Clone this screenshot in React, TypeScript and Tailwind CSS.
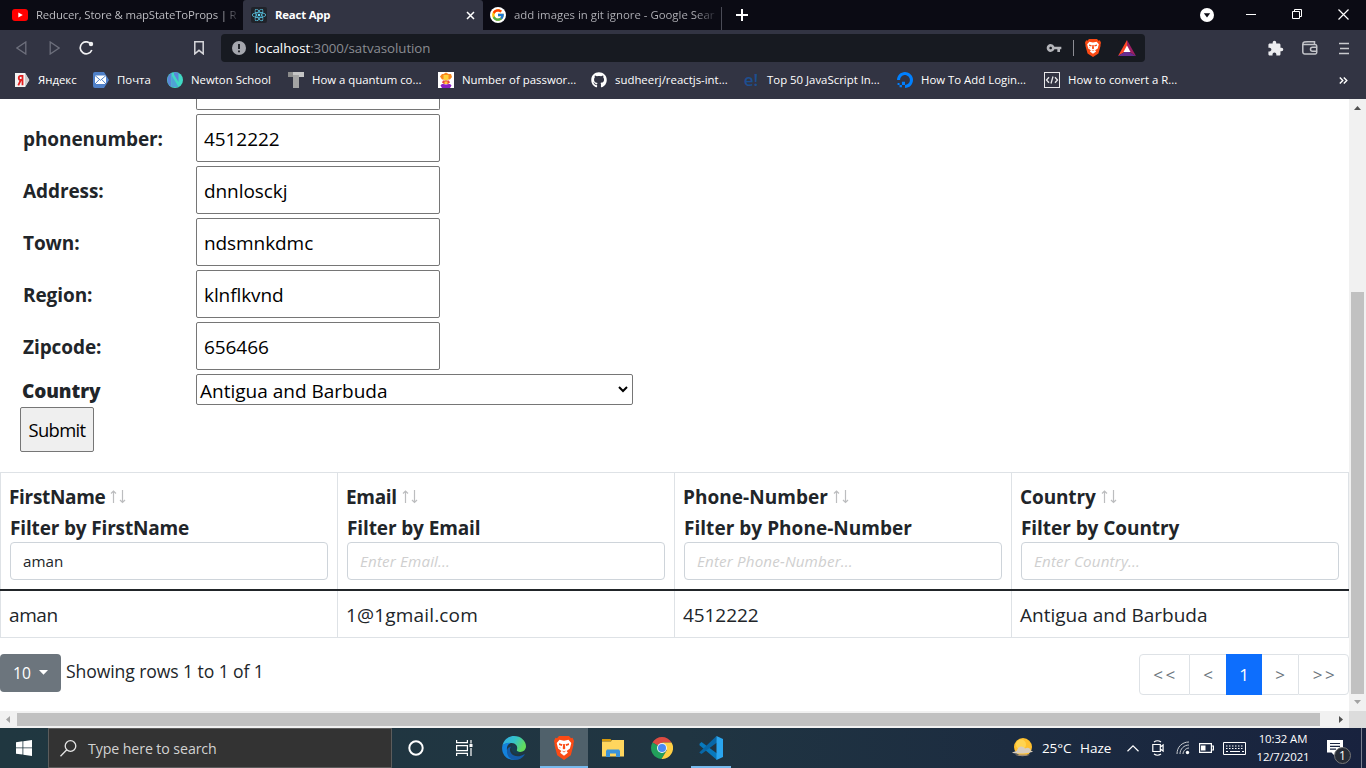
import type { ReactNode } from "react";
import { FaGithub, FaReact } from "react-icons/fa";
import { SiDigitalocean } from "react-icons/si";
import { FcGoogle } from "react-icons/fc";
import { MdExtension, MdVpnKey } from "react-icons/md";

function BraveIcon({ w, h }: { w: number; h: number }) {
  return (
    <span className="flex shrink-0 items-center justify-center">
      <svg width={w} height={h} viewBox="0 0 20 24" preserveAspectRatio="none">
        <path d="M5 0h10l2 2.200l1.600-.4L20 5l-.7 3 .2 1-2.700 10.200L10 24l-6.800-4.800L.5 9l.2-1L0 5l1.400-3.200L3 2.200z" fill="#fb4a14" />
        <path d="M5.500 3.800 10 4.700l4.500-.9L17.300 7l-1.400 5.600L12.600 15l1.300 1.700L10 19.800l-3.900-3.100L7.400 15l-3.300-2.400L2.700 7z" fill="#fff" />
        <path d="M5 7.300l3.500 1L7.800 10 5 9zM15 7.300l-3.500 1 .7 1.700L15 9zM9.200 8h1.600l.5 4.500L10 13.500l-1.300-1zM7.700 14.400l2.300 1 2.300-1L10 16.400zM4.500 11l1.500 1.300L7 12z" fill="#fb4a14" />
      </svg>
    </span>
  );
}

function YoutubeIcon() {
  return (
    <svg width="16" height="16" viewBox="0 0 16 16">
      <rect x="0" y="2" width="16" height="12" rx="3" fill="#f00" />
      <path d="M6.300 5.400v5.200L10.800 8z" fill="#fff" />
    </svg>
  );
}

function YandexIcon() {
  return (
    <svg width="16" height="16" viewBox="0 0 16 16">
      <path d="M1 1h10l4.300 7L11 15H1z" fill="#f3f3f3" />
      <path d="M11 1l4.300 7L11 15z" fill="#cfcfcf" />
      <path d="M8.500 3v10.300M8.500 3.800H6.800c-2.700 0-2.700 4.200 0 4.200h1.700M6.800 8 4.300 13.300" stroke="#e02020" strokeWidth="1.800" fill="none" />
    </svg>
  );
}

function MailIcon() {
  return (
    <svg width="16" height="16" viewBox="0 0 16 16">
      <path d="M2 0h9l5 8-5 8H2a2 2 0 0 1-2-2V2a2 2 0 0 1 2-2z" fill="#4f80c8" />
      <rect x="2" y="3.500" width="11" height="8.500" fill="#fff" />
      <path d="M2 3.500l5.500 4.800L13 3.500M2 12l4.300-4.500M13 12 8.700 7.500" stroke="#4f80c8" strokeWidth="1" fill="none" />
    </svg>
  );
}

function NewtonIcon() {
  return (
    <svg width="16" height="16" viewBox="0 0 16 16">
      <circle cx="8" cy="8" r="8" fill="#40d9c4" />
      <path d="M4.500 1A8 8 0 0 0 4.500 15zM11.500 1v9L7 2.500V0z" fill="#5c86d8" />
      <path d="M5 15V4l6.500 11z" fill="#4fa3d6" />
    </svg>
  );
}

function QuantumIcon() {
  return (
    <svg width="16" height="16" viewBox="0 0 16 16">
      <path d="M0 0h7v5H0z" fill="#8b8b8b" />
      <path d="M5 0h11v5H5z" fill="#c5c5c5" />
      <path d="M5 3h6v13H5z" fill="#a3a3a3" />
    </svg>
  );
}

function WizardIcon() {
  return (
    <svg width="16" height="16" viewBox="0 0 16 16">
      <rect width="16" height="16" fill="#fff" />
      <path d="M2 4.500 4 2l1.500 0L8 .5l2.500 1.500L13 2l1 3-2 2.500H4z" fill="#f7871f" />
      <path d="M5.500 3h5v4l-2.500 2L5.500 7z" fill="#ffd23c" />
      <path d="M5 8.500h6l1 2-2 1.500H6l-2-1.500z" fill="#e9443c" />
      <path d="M6.500 9.500h3v2.500h-3z" fill="#ffcf3c" />
      <path d="M2.500 13.500C4 11 6 12 8 12.500c2-.5 4-1.500 5.500 1L12 16H4z" fill="#8a1fc4" />
    </svg>
  );
}

function CodeIcon() {
  return (
    <svg width="16" height="16" viewBox="0 0 16 16" fill="none" stroke="#e8e8ea">
      <rect x=".5" y=".5" width="15" height="15" />
      <path d="M5 5.200 2.500 8 5 10.800M11 5.200 13.500 8 11 10.800M9 4.500l-2 7" strokeWidth="1.300" />
    </svg>
  );
}

function Tab({ icon, title, className }: { icon: ReactNode; title: ReactNode; className: string }) {
  return (
    <div className={`flex h-[30px] shrink-0 items-center ${className}`}>
      <span className="flex size-4 shrink-0 items-center justify-center">{icon}</span>
      {title}
    </div>
  );
}

function Bookmark({ icon, label, className }: { icon: ReactNode; label: string; className: string }) {
  return (
    <div className={`flex shrink-0 items-center whitespace-nowrap ${className}`}>
      <span className="mr-2 flex size-4 shrink-0 items-center justify-center">{icon}</span>
      {label}
    </div>
  );
}

function Browser() {
  return (
    <header className="flex h-[99px] shrink-0 flex-col bg-[#323443] text-[11.4px] text-white">
      <div className="flex h-[30px] bg-[#0b0b14]">
        <Tab
          className="w-[243px] pl-3"
          icon={<YoutubeIcon />}
          title={
            <span className="ml-2 w-[206px] bg-linear-to-r from-[#c3c3c8] from-90% to-[#0b0b14] bg-clip-text tracking-[-0.16px] whitespace-nowrap text-transparent">
              Reducer, Store &amp; mapStateToProps | R
            </span>
          }
        />
        <Tab
          className="w-[240px] rounded-t-[3px] bg-[#323443] pl-2"
          icon={
            <span className="flex size-4 items-center justify-center rounded-[2px] bg-[#20232a] text-[#61dafb]">
              <FaReact size={14} />
            </span>
          }
          title={
            <>
              <span className="ml-2 w-[190px] font-bold tracking-[-0.2px]">React App</span>
              <svg width="9" height="9" viewBox="0 0 9 9" className="ml-px">
                <path d="M1 1l7 7M8 1 1 8" stroke="#fff" strokeWidth="1.500" />
              </svg>
            </>
          }
        />
        <Tab
          className="w-[238px] pl-[7px]"
          icon={
            <span className="flex size-4 items-center justify-center rounded-full bg-white">
              <FcGoogle size={14} />
            </span>
          }
          title={
            <span className="ml-2 w-[206px] bg-linear-to-r from-[#b4b4ba] from-88% to-[#0b0b14] bg-clip-text whitespace-nowrap text-transparent">
              add images in git ignore - Google Sear
            </span>
          }
        />
        <div className="mt-[7px] h-[23px] w-px bg-[#4a4b56]" />
        <svg width="12" height="12" viewBox="0 0 12 12" className="mt-[9px] ml-[14px]">
          <path d="M6 0v12M0 6h12" stroke="#fff" strokeWidth="2" />
        </svg>
        <svg width="14" height="14" viewBox="0 0 14 14" className="mt-2 ml-auto">
          <circle cx="7" cy="7" r="7" fill="#fff" />
          <path d="M3.800 5.200h6.400L7 9.500z" fill="#0b0b14" />
        </svg>
        <svg width="10" height="10" viewBox="0 0 10 10" className="mt-[9px] ml-8">
          <path d="M0 5.500h10" stroke="#fff" />
        </svg>
        <svg width="10" height="10" viewBox="0 0 10 10" fill="none" stroke="#fff" className="mt-[9px] ml-9">
          <path d="M.5 2.500h7v7h-7zM2.500 2.500v-2h7v7h-2" />
        </svg>
        <svg width="11" height="11" viewBox="0 0 11 11" className="mt-[9px] mr-[17px] ml-9">
          <path d="M.5.500l10 10M10.500.500l-10 10" stroke="#fff" strokeWidth="1.200" />
        </svg>
      </div>

      <div className="flex h-9 items-center">
        <svg width="11" height="14" viewBox="0 0 11 14" className="ml-4" fill="none" stroke="#6d6f7c" strokeWidth="1.300">
          <path d="M9.800 1v12L.9 7z" />
        </svg>
        <svg width="11" height="14" viewBox="0 0 11 14" className="ml-[22px]" fill="none" stroke="#6d6f7c" strokeWidth="1.300">
          <path d="M1.200 1v12L10.100 7z" />
        </svg>
        <svg width="15" height="14" viewBox="0 0 15 14" className="ml-[19px]">
          <path d="M12.300 3.600A6 6 0 1 0 12.800 9" fill="none" stroke="#f0f0f2" strokeWidth="1.700" />
          <circle cx="12" cy="3" r="2.200" fill="#f0f0f2" />
        </svg>
        <svg width="10" height="14" viewBox="0 0 10 14" className="ml-[100px]">
          <path d="M.8.800h8.400v12L5 9.300.8 12.800z" fill="none" stroke="#d8d8dc" strokeWidth="1.500" />
        </svg>
        <div className="ml-[17px] flex h-7 w-[924px] items-center rounded-[4px] bg-[#171a21]">
          <svg width="14" height="14" viewBox="0 0 14 14" className="ml-[11px]">
            <circle cx="7" cy="7" r="7" fill="#a5a7ae" />
            <path d="M7 3v5M7 9.400v1.800" stroke="#171a21" strokeWidth="1.800" />
          </svg>
          <span className="ml-[9px] pt-px text-[13.300px] tracking-[-0.06px] whitespace-nowrap text-[#8a8c92]">
            <span className="text-white">localhost</span>:3000/satvasolution
          </span>
          <MdVpnKey size={16} className="ml-auto text-[#b4b5ba]" />
          <span className="ml-[11px] h-4 w-px bg-[#8c8d94]" />
          <span className="ml-[11px]">
            <BraveIcon w={16} h={18} />
          </span>
          <svg width="18" height="16" viewBox="0 0 18 16" className="mr-[9px] ml-[17px]">
            <path d="M9 0 0 16l9-5.500z" fill="#ff4724" />
            <path d="M0 16h18l-9-5.500z" fill="#662d91" />
            <path d="M9 0v10.500l9 5.500z" fill="#9e1f63" />
            <path d="M9 5.500 5.500 12h7z" fill="#fff" />
          </svg>
        </div>
        <MdExtension size={17} className="ml-[122px] text-[#ececef]" />
        <svg width="16" height="14" viewBox="0 0 16 14" className="ml-[18px]" fill="none" stroke="#c4c5ca" strokeWidth="1.500">
          <path d="M.8 3.500V11a2 2 0 0 0 2 2h10.400a1.500 1.500 0 0 0 1.500-1.500V5a1.500 1.500 0 0 0-1.500-1.500zM.8 3.500C.8 0 3 .8 12.500.8v2.500M15.500 6.300h-5a2 2 0 0 0 0 4h5" />
        </svg>
        <svg width="10" height="13" viewBox="0 0 10 13" className="ml-[21px]" stroke="#c9cace" strokeWidth="1.600">
          <path d="M0 1.500h10M1 6.500h9M0 11.500h10" />
        </svg>
      </div>

      <div className="flex h-7 items-center pl-[14px]">
        <Bookmark className="w-[79px]" icon={<YandexIcon />} label="Яндекс" />
        <Bookmark className="w-[74px]" icon={<MailIcon />} label="Почта" />
        <Bookmark className="w-[121px]" icon={<NewtonIcon />} label="Newton School" />
        <Bookmark className="w-[150px]" icon={<QuantumIcon />} label="How a quantum co..." />
        <Bookmark className="w-[153px]" icon={<WizardIcon />} label="Number of passwor..." />
        <Bookmark className="w-[152px]" icon={<FaGithub size={16} />} label="sudheerj/reactjs-int..." />
        <Bookmark
          className="w-[154px]"
          icon={<span className="text-[17px] leading-4 font-semibold text-[#1d4f91]">e!</span>}
          label="Top 50 JavaScript In..."
        />
        <Bookmark className="w-[147px]" icon={<SiDigitalocean size={16} color="#0080ff" />} label="How To Add Login..." />
        <Bookmark className="w-[140px]" icon={<CodeIcon />} label="How to convert a R..." />
        <svg width="9" height="7" viewBox="0 0 9 7" className="mr-[18px] ml-auto" fill="none" stroke="#fff" strokeWidth="1.400">
          <path d="M.8.500l3 3-3 3M4.800.500l3 3-3 3" />
        </svg>
      </div>
    </header>
  );
}

const fields = [
  { label: "phonenumber:", value: "4512222" },
  { label: "Address:", value: "dnnlosckj" },
  { label: "Town:", value: "ndsmnkdmc" },
  { label: "Region:", value: "klnflkvnd" },
  { label: "Zipcode:", value: "656466" },
];

function Form() {
  return (
    <div className="flex flex-col pl-5">
      <div className="ml-44 h-[11px] w-[244px] rounded-b-[2px] border border-t-0 border-[#767676]" />
      {fields.map((f) => (
        <div key={f.label} className="mt-1 flex h-12 items-center pl-[3px]">
          <span className="w-[173px] pt-px font-bold tracking-[-0.08px]">{f.label}</span>
          <div className="flex h-12 w-[244px] items-center rounded-[2px] border border-[#767676] pt-px pl-[7px] tracking-[-0.08px] text-black">
            {f.value}
          </div>
        </div>
      ))}
      <div className="mt-1 flex h-[31px] items-center pl-[2px]">
        <span className="w-[174px] pt-[3px] font-extrabold tracking-[-0.1px]">Country</span>
        <div className="flex h-[31px] w-[437px] items-center justify-between rounded-[2px] border border-[#767676] pr-1 pl-[3px] text-black">
          <span className="pt-[3px]">Antigua and Barbuda</span>
          <svg width="10" height="7" viewBox="0 0 10 7">
            <path d="M1 1l4 4 4-4" fill="none" stroke="#000" strokeWidth="2" />
          </svg>
        </div>
      </div>
      <button className="mt-[2px] flex h-[45px] w-[74px] items-center justify-center rounded-[2px] border border-[#767676] bg-[#efefef] text-[18.400px] tracking-[-0.65px] text-black">
        Submit
      </button>
    </div>
  );
}

const columns = [
  { name: "FirstName", cell: "aman", filter: "aman", tracking: "tracking-[-0.32px]", tracking2: "tracking-[-0.16px]", cellTracking: "tracking-[-0.4px]" },
  { name: "Email", cell: "1@1gmail.com", filter: "", tracking: "tracking-[-0.3px]", tracking2: "tracking-[-0.12px]", cellTracking: "tracking-[0.17px]" },
  { name: "Phone-Number", cell: "4512222", filter: "", tracking: "tracking-[0.04px]", tracking2: "tracking-[0.03px]", cellTracking: "tracking-[-0.08px]" },
  { name: "Country", cell: "Antigua and Barbuda", filter: "", tracking: "tracking-[-0.12px]", tracking2: "tracking-[-0.06px]", cellTracking: "tracking-normal" },
];

function SortArrows() {
  return (
    <svg width="18" height="14" viewBox="0 0 18 14" fill="none" stroke="#bcbdbf" className="ml-1">
      <path d="M4.500 13V1M2 3.500l2.500-2.500L7 3.500M13.500 0v12.500M11 10l2.500 2.500L16 10" strokeWidth="1.200" />
    </svg>
  );
}

function Table() {
  return (
    <div className="mt-5 flex flex-col">
      <div className="border-b-2 border-[#212529]">
        <div className="grid grid-cols-4 border-t border-l border-[#dee2e6]">
          {columns.map((c) => (
            <div key={c.name} className="flex h-[116px] flex-col border-r border-[#dee2e6] px-[9px] pt-[9px] font-bold">
              <div className={`-ml-px flex h-[31px] items-center pb-[2px] ${c.tracking}`}>
                {c.name}
                <SortArrows />
              </div>
              <div className={`flex h-[29px] items-center whitespace-nowrap ${c.tracking2}`}>Filter by {c.name}</div>
              <div className="flex h-[38px] shrink-0 items-center rounded-[4px] border border-[#ced4da] px-3 text-[15.200px] font-normal">
                {c.filter || <i className="tracking-[0.15px] text-[#cfcfcf]">Enter {c.name}...</i>}
              </div>
            </div>
          ))}
        </div>
      </div>
      <div className="grid grid-cols-4 border-b border-l border-[#dee2e6]">
        {columns.map((c) => (
          <div key={c.name} className={`flex h-[46px] items-center border-r border-[#dee2e6] px-2 pt-[2px] ${c.cellTracking}`}>
            {c.cell}
          </div>
        ))}
      </div>
    </div>
  );
}

function Pager() {
  return (
    <div className="mt-4 flex items-start">
      <button className="flex h-[38px] w-[61px] items-center rounded-[4px] bg-[#6c757d] pl-[13px] text-[15.600px] text-white">
        10
        <svg width="9" height="5" viewBox="0 0 9 5" className="ml-2 -mt-[2px]" fill="#fff">
          <path d="M0 0h9L4.500 4.800z" />
        </svg>
      </button>
      <span className="ml-[5px] pt-1 text-[17.600px] leading-[26px] tracking-[-0.1px]">Showing rows 1 to 1 of 1</span>
      <div className="ml-auto flex h-[41px] text-[17px] text-[#6c757d]">
        <span className="flex w-[51px] items-center justify-center rounded-l-[4px] border border-[#dee2e6] pl-[2px] tracking-[2.500px]">&lt;&lt;</span>
        <span className="flex w-9 items-center justify-center border-y border-[#dee2e6]">&lt;</span>
        <span className="flex w-9 items-center justify-center bg-[#0d6efd] text-white">1</span>
        <span className="flex w-9 items-center justify-center border-y border-[#dee2e6]">&gt;</span>
        <span className="flex w-[51px] items-center justify-center rounded-r-[4px] border border-[#dee2e6] pl-[3px] tracking-[2.500px]">&gt;&gt;</span>
      </div>
    </div>
  );
}

function Taskbar() {
  return (
    <footer className="flex h-10 shrink-0 items-stretch bg-linear-to-r from-[#203740] via-[#203542] to-[#18223e] text-white">
      <div className="flex w-12 items-center justify-center">
        <svg width="16" height="16" viewBox="0 0 16 16" fill="#fff">
          <path d="M0 2.200 6.500 1.300v6.200H0zM7.300 1.200 16 0v7.500H7.300zM0 8.300h6.500v6.300L0 13.700zM7.300 8.300H16V16l-8.700-1.200z" />
        </svg>
      </div>
      <div className="flex w-[344px] items-center border border-[#5c5c5c] bg-[#333]">
        <svg width="17" height="17" viewBox="0 0 17 17" className="ml-[11px]" fill="none" stroke="#e6e6e6" strokeWidth="1.300">
          <circle cx="10.500" cy="6" r="5.300" />
          <path d="M6.800 9.800.5 16.200" />
        </svg>
        <span className="ml-[11px] pt-[2px] text-[14.200px] tracking-[-0.1px] text-[#d2d2d2]">Type here to search</span>
      </div>
      <div className="flex w-12 items-center justify-center">
        <svg width="16" height="16" viewBox="0 0 16 16" fill="none" stroke="#fff" strokeWidth="2">
          <circle cx="8" cy="8" r="6.700" />
        </svg>
      </div>
      <div className="flex w-12 items-center justify-center">
        <svg width="17" height="16" viewBox="0 0 17 16" fill="none" stroke="#fff" strokeWidth="1.200">
          <path d="M.6 0v2.600h10.800V0M.6 16v-2.600h10.800V16M.6 5.600h10.800v5H.6zM15 0v3.500M15 8v8" />
          <path d="M13.500 4h3v3h-3z" fill="#fff" stroke="none" />
        </svg>
      </div>
      <div className="flex w-[52px] items-center justify-center pr-px">
        <svg width="24" height="24" viewBox="0 0 24 24">
          <defs>
            <linearGradient id="edgeTop" x1="0" x2="1" y1="0" y2=".4">
              <stop offset="0" stopColor="#2fa8ea" />
              <stop offset=".55" stopColor="#35c4c8" />
              <stop offset="1" stopColor="#62dc5c" />
            </linearGradient>
          </defs>
          <path d="M.3 10C1.500 4 6 0 12 0c7 0 12 5 12 10.300 0 3.500-2.600 5.700-5.800 5.700-2.500 0-4-1-3.600-2 1.400-2 .6-6.500-4.800-7C5 6.600 1.500 8 .3 10z" fill="url(#edgeTop)" />
          <path d="M.2 10.500C1.200 7.500 5 6.400 8.700 6.900c-3 1.400-4.400 4.200-3.600 7.600.8 4 4 7 8.400 9.300C6 25-.8 19 .2 10.500z" fill="#1482dc" />
          <path d="M9.200 10.500C6.800 13 8 17.500 12 19.400c3 1.400 6.500 1 9.800-1 .7-.4 1 .1.700.5-2 3-5.500 5.100-9.500 5.100-5 0-8.500-4.500-8-9.500.2-2 1.800-3.500 4.200-4z" fill="#145ba8" />
          <path d="M14.800 13.300c-.9 1.400 1.500 3.500 4 2.700-3 4.500-10.500 1.500-9.600-5.500 1.500-3 6.400-1 5.600 2.800z" fill="#163e52" />
        </svg>
      </div>
      <div className="flex w-12 items-center justify-center border-b-2 border-[#76b9ed] bg-[#50616b] pt-[2px]">
        <BraveIcon w={20} h={24} />
      </div>
      <div className="flex w-[49px] items-center justify-center">
        <svg width="22" height="18" viewBox="0 0 22 18">
          <path d="M0 0h8.500l2 2.500H0z" fill="#d79a0c" />
          <path d="M0 2.500h9L10 1h12v16.500H0z" fill="#ffd65e" />
          <path d="M4 18v-6l1-1.500h12l1 1.500v6h-4v-3.500H8V18z" fill="#3b93da" />
        </svg>
      </div>
      <div className="flex w-[49px] items-center justify-center">
        <svg width="22" height="22" viewBox="0 0 22 22">
          <path d="M11 11 1.500 5.500A11 11 0 0 1 20.500 5.500H11z" fill="#dd4b42" />
          <path d="M11 11 1.500 5.500A11 11 0 0 0 10.500 22l5-8.500z" fill="#22a05b" />
          <path d="M11 5.500h9.500A11 11 0 0 1 10.500 22l5.300-8.800z" fill="#ffcf44" />
          <circle cx="11" cy="11" r="5" fill="#f3f4f5" />
          <circle cx="11" cy="11" r="4" fill="#4a8af4" />
        </svg>
      </div>
      <div className="ml-[5px] flex w-10 items-center justify-center border-b-2 border-[#76b9ed] pt-[2px]">
        <svg width="24" height="24" viewBox="0 0 24 24">
          <path d="M.5 7.800 2.500 6 18 17.500V24L.5 9.200z" fill="#0879bd" />
          <path d="M.5 16.200 17.500 0 18 6.500 2.500 18 .5 16.800z" fill="#0867a7" />
          <path d="M17.500 0 24 3v18l-6.500 3z" fill="#2aa5ef" />
        </svg>
      </div>

      <div className="ml-auto flex items-center">
        <svg width="21" height="20" viewBox="0 0 21 20">
          <circle cx="11" cy="9" r="9" fill="#ffc02e" />
          <circle cx="9" cy="6.500" r="5" fill="#ffd451" />
          <path d="M0 14.500c2-1 4-.8 5-2 1-5 6-5 8-2 3-2 6 0 5.500 2l2.500 1c-3 2-18 3-21 1z" fill="#d8cdbd" />
          <path d="M3 16.500h15c-3 2-11 2.500-15 0z" fill="#9f8d78" />
        </svg>
        <span className="ml-[9px] w-[38px] pt-px text-[13.500px] tracking-[-0.1px] whitespace-nowrap">25°C</span>
        <span className="w-[47px] pt-px text-[13.500px] whitespace-nowrap">Haze</span>
        <svg width="12" height="7" viewBox="0 0 12 7" fill="none" stroke="#fff" strokeWidth="1.200">
          <path d="M.5 6.300 6 .9l5.500 5.400" />
        </svg>
        <svg width="12" height="16" viewBox="0 0 12 16" className="ml-[13px]" fill="none" stroke="#fff" strokeWidth="1.200">
          <path d="M.8 4.500h7.500v7H.8zM8.300 7l2.800-2v6L8.300 9M2 2Q5.500-.5 9 2M2 14q3.500 2.500 7 0" />
        </svg>
        <svg width="14" height="14" viewBox="0 0 14 14" className="ml-3" fill="none" stroke="#c8ccd0" strokeWidth="1">
          <path d="M1 13C1 6 6 1 13 1M4 13c0-5 4-9 9-9M7 13c0-3 3-6 6-6" />
          <circle cx="11.500" cy="11.500" r="1.700" fill="#fff" stroke="none" />
        </svg>
        <svg width="15" height="10" viewBox="0 0 15 10" className="ml-[9px]" fill="none" stroke="#fff" strokeWidth="1.200">
          <path d="M.6.600h11.800v8.800H.6zM13 3h1.400v4H13" />
          <path d="M2 2.500h4.500v5H2z" fill="#fff" stroke="none" />
        </svg>
        <svg width="23" height="13" viewBox="0 0 23 13" className="ml-[9px]" fill="none" stroke="#fff">
          <path d="M.5.500h22v12H.5z" />
          <path d="M3 4h18M3 6.500h18" strokeDasharray="1.500 1.500" />
          <path d="M3 9.500h2M7 9.500h10M19 9.500h2" />
        </svg>
        <div className="ml-[10px] flex w-[54px] flex-col items-center text-[11.400px] leading-[18px] tracking-[-0.1px] whitespace-nowrap">
          <span>10:32 AM</span>
          <span>12/7/2021</span>
        </div>
        <div className="relative ml-[17px] flex h-10 w-[39px] items-center">
          <svg width="16" height="16" viewBox="0 0 16 16">
            <path d="M0 0h16v12.500H8V16l-3.500-3.500H0z" fill="#fff" />
            <path d="M3 3.500h10M3 6.300h10M3 9.200h6" stroke="#1a2440" strokeWidth="1.200" />
          </svg>
          <span className="absolute top-[19px] left-[7px] flex size-[17px] items-center justify-center rounded-full border border-[#777] bg-[#262b35] text-[12px] leading-none">
            1
          </span>
          <span className="absolute top-0 right-1 h-10 w-px bg-[#7a8090]" />
        </div>
      </div>
    </footer>
  );
}

export default function App() {
  return (
    <div className="flex h-[768px] w-[1366px] flex-col overflow-hidden bg-white font-['Open_Sans','Noto_Sans',sans-serif]">
      <Browser />
      <div className="flex h-[612px] shrink-0">
        <main className="w-[1349px] text-[19px] leading-[30px] text-[#212529]">
          <Form />
          <Table />
          <Pager />
        </main>
        <div className="flex w-[17px] flex-col items-center justify-between bg-[#f1f1f1]">
          <svg width="7" height="4" viewBox="0 0 7 4" className="mt-[7px]" fill="#505050">
            <path d="M0 4h7L3.500 0z" />
          </svg>
          <div className="mt-auto h-[402px] w-[13px] bg-[#c1c1c1]" />
          <svg width="7" height="4" viewBox="0 0 7 4" className="mt-[6px] mb-[7px]" fill="#a3a3a3">
            <path d="M0 0h7L3.500 4z" />
          </svg>
        </div>
      </div>
      <div className="flex h-[17px] shrink-0 items-center bg-[#f1f1f1]">
        <svg width="4" height="7" viewBox="0 0 4 7" className="ml-[6px]" fill="#a3a3a3">
          <path d="M4 0v7L0 3.500z" />
        </svg>
        <div className="ml-[7px] h-[13px] w-[1303px] bg-[#c1c1c1]" />
        <svg width="4" height="7" viewBox="0 0 4 7" className="ml-[19px]" fill="#505050">
          <path d="M0 0v7l4-3.500z" />
        </svg>
        <div className="ml-auto h-[17px] w-[17px] bg-[#dcdcdc]" />
      </div>
      <Taskbar />
    </div>
  );
}
